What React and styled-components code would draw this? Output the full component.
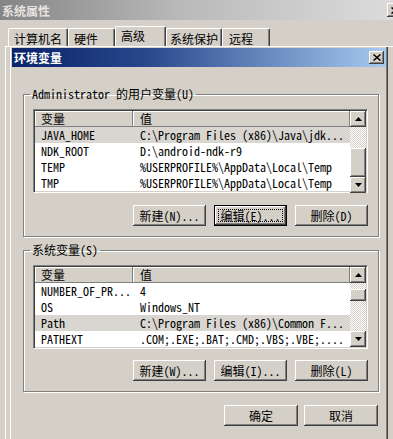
import React from "react"
import styled, { createGlobalStyle, css } from "styled-components"

const FACE = "#d4d0c8"
const FONT = `"Noto Sans Mono CJK SC", "Liberation Mono", "Noto Sans CJK SC", monospace`

const GlobalStyle = createGlobalStyle`
	html, body {
		margin: 0;
		padding: 0;
		background: ${FACE};
	}
	body {
		font-family: ${FONT};
		font-size: 12px;
		color: #000;
		overflow: hidden;
	}
`

const raised = css`
	box-shadow: inset -1px -1px #404040, inset 1px 1px #fff, inset -2px -2px #808080, inset 2px 2px ${FACE};
`

const Screen = styled.div`
	width: 393px;
	height: 439px;
	overflow: hidden;
	background: ${FACE};
`

const OuterWindow = styled.div`
	width: 400px;
`

const OuterTitle = styled.div`
	height: 20px;
	display: flex;
	align-items: center;
	justify-content: space-between;
	padding-left: 2px;
	background: linear-gradient(to right, #858585, #b9b9b9 45%, #dddddd);
	color: #e6e4e0;
	font-weight: bold;
`

const CaptionButton = styled.div`
	width: ${(p) => p.$w || 16}px;
	height: ${(p) => p.$h || 14}px;
	margin-right: ${(p) => p.$mr || 0}px;
	display: flex;
	align-items: center;
	justify-content: center;
	background: ${FACE};
	${raised}
`

const TabStrip = styled.div`
	height: 26px;
	display: flex;
	align-items: flex-end;
	padding-left: 8px;
`

const Tab = styled.div`
	width: ${(p) => p.$w}px;
	height: ${(p) => (p.$active ? 20 : 18)}px;
	box-sizing: border-box;
	padding: ${(p) => (p.$active ? 2 : 3)}px 0 0 ${(p) => p.$pl || 5}px;
	line-height: 14px;
	border-top: 1px solid #fff;
	border-left: 1px solid #fff;
	border-right: 1px solid #404040;
	border-radius: 2px 2px 0 0;
	box-shadow: inset -1px 0 #808080;
	white-space: nowrap;
`

const TabPanel = styled.div`
	margin-left: 5px;
	padding-left: 4px;
	border-left: 1px solid #fff;
	border-top: 1px solid #fff;
`

const Dialog = styled.div`
	width: 378px;
	height: 400px;
	box-sizing: border-box;
	margin-top: -1px;
	padding: 2px;
	background: ${FACE};
	box-shadow: inset 1px 1px #fff, inset -1px -1px #404040, inset -2px -2px #808080;
`

const TitleBar = styled.div`
	height: 19px;
	display: flex;
	align-items: center;
	justify-content: space-between;
	padding-left: 2px;
	background: linear-gradient(to right, #0a246a, #27468a 35%, #a6caf0);
	color: #fff;
	font-weight: bold;
`

const Body = styled.div`
	padding: 20px 7px 0 11px;
`

const Group = styled.fieldset`
	margin: 0;
	padding: 0;
	min-width: 0;
	border: 1px solid #808080;
	box-shadow: 1px 1px 0 #fff, inset 1px 1px 0 #fff;
	& + & {
		margin-top: 6px;
	}
`

const Legend = styled.legend`
	margin-left: 6px;
	padding: 0 2px;
	line-height: 14px;
	white-space: nowrap;
`

const GroupInner = styled.div`
	padding: 8px 10px 10px 9px;
`

const ListView = styled.div`
	display: flex;
	height: 84px;
	box-sizing: border-box;
	padding: 1px;
	background: #fff;
	border: 1px solid;
	border-color: #808080 #fff #fff #808080;
	box-shadow: inset 1px 1px #404040, inset -1px -1px ${FACE};
`

const Table = styled.div`
	flex: 1;
	min-width: 0;
	overflow: hidden;
`

const HeaderRow = styled.div`
	display: grid;
	grid-template-columns: 98px 1fr;
	height: 16px;
`

const HeaderCell = styled.div`
	padding-left: ${(p) => p.$pl}px;
	line-height: 16px;
	background: ${FACE};
	box-shadow: inset -1px -1px #808080, inset 1px 1px #fff;
`

const Row = styled.div`
	display: grid;
	grid-template-columns: 98px 1fr;
	height: 16px;
	line-height: 16px;
	white-space: nowrap;
	background: ${(p) => (p.$selected ? "#d9d6d1" : "#fff")};
`

const Cell = styled.div`
	padding-left: ${(p) => p.$pl}px;
	overflow: hidden;
`

const ScrollBar = styled.div`
	width: 16px;
	display: flex;
	flex-direction: column;
	background: repeating-conic-gradient(${FACE} 0 25%, #fff 0 50%) 0 0 / 2px 2px;
`

const ScrollButton = styled.div`
	height: 16px;
	flex: none;
	display: flex;
	align-items: center;
	justify-content: center;
	background: ${FACE};
	${raised}
`

const Thumb = styled.div`
	flex: none;
	background: ${FACE};
	${raised}
`

const ButtonRow = styled.div`
	display: flex;
	justify-content: flex-end;
	gap: ${(p) => p.$gap || 8}px;
	margin-top: ${(p) => p.$mt || 0}px;
	padding-right: ${(p) => p.$pr || 0}px;
`

const Button = styled.button`
	width: ${(p) => p.$w || 73}px;
	height: 21px;
	padding: 0;
	border: 0;
	font: inherit;
	color: #000;
	background: ${FACE};
	white-space: nowrap;
	${raised}
	${(p) =>
		p.$focus &&
		css`
			box-shadow: inset 0 0 0 1px #000, inset -2px -2px #404040, inset 2px 2px #fff, inset -3px -3px #808080;
			outline: 1px dotted #000;
			outline-offset: -5px;
		`}
`

const Arrow = ({ down }) => (
	<svg width="7" height="4" viewBox="0 0 7 4">
		<polygon points={down ? "0,0 7,0 3.5,4" : "3.5,0 7,4 0,4"} fill="#000" />
	</svg>
)

const CloseGlyph = () => (
	<svg width="8" height="7" viewBox="0 0 8 7">
		<path d="M0.5 0.5 L7.5 6.5 M7.5 0.5 L0.5 6.5" stroke="#000" strokeWidth="1.5" />
	</svg>
)

const userVars = [
	{ name: "JAVA_HOME", value: "C:\\Program Files (x86)\\Java\\jdk...", selected: true },
	{ name: "NDK_ROOT", value: "D:\\android-ndk-r9" },
	{ name: "TEMP", value: "%USERPROFILE%\\AppData\\Local\\Temp" },
	{ name: "TMP", value: "%USERPROFILE%\\AppData\\Local\\Temp" },
]

const systemVars = [
	{ name: "NUMBER_OF_PR...", value: "4" },
	{ name: "OS", value: "Windows_NT" },
	{ name: "Path", value: "C:\\Program Files (x86)\\Common F...", selected: true },
	{ name: "PATHEXT", value: ".COM;.EXE;.BAT;.CMD;.VBS;.VBE;...." },
]

const VarList = ({ rows, before, thumb }) => (
	<ListView>
		<Table>
			<HeaderRow>
				<HeaderCell $pl={6}>变量</HeaderCell>
				<HeaderCell $pl={7}>值</HeaderCell>
			</HeaderRow>
			{rows.map((r) => (
				<Row key={r.name} $selected={r.selected}>
					<Cell $pl={6}>{r.name}</Cell>
					<Cell $pl={7}>{r.value}</Cell>
				</Row>
			))}
		</Table>
		<ScrollBar>
			<ScrollButton>
				<Arrow />
			</ScrollButton>
			<div style={{ height: before, flex: "none" }} />
			<Thumb style={{ height: thumb }} />
			<div style={{ flex: 1 }} />
			<ScrollButton>
				<Arrow down />
			</ScrollButton>
		</ScrollBar>
	</ListView>
)

const App = () => {
	return (
		<Screen>
			<GlobalStyle />
			<OuterWindow>
				<OuterTitle>
					<span>系统属性</span>
					<CaptionButton $mr={-3}>
						<CloseGlyph />
					</CaptionButton>
				</OuterTitle>
				<TabStrip>
					<Tab $w={60}>计算机名</Tab>
					<Tab $w={47}>硬件</Tab>
					<Tab $w={51} $active $pl={5}>
						高级
					</Tab>
					<Tab $w={56} $pl={3}>
						系统保护
					</Tab>
					<Tab $w={48} $pl={6}>
						远程
					</Tab>
				</TabStrip>
				<TabPanel>
					<Dialog>
						<TitleBar>
							<span>环境变量</span>
							<CaptionButton $w={15} $h={13} $mr={2}>
								<CloseGlyph />
							</CaptionButton>
						</TitleBar>
						<Body>
							<Group>
								<Legend>Administrator 的用户变量(U)</Legend>
								<GroupInner>
									<VarList rows={userVars} before={21} thumb={29} />
									<ButtonRow $mt={12}>
										<Button>新建(N)...</Button>
										<Button $focus>编辑(E)...</Button>
										<Button>删除(D)</Button>
									</ButtonRow>
								</GroupInner>
							</Group>
							<Group>
								<Legend>系统变量(S)</Legend>
								<GroupInner>
									<VarList rows={systemVars} before={6} thumb={12} />
									<ButtonRow $mt={11}>
										<Button>新建(W)...</Button>
										<Button>编辑(I)...</Button>
										<Button>删除(L)</Button>
									</ButtonRow>
								</GroupInner>
							</Group>
							<ButtonRow $mt={13} $gap={6} $pr={1}>
								<Button $w={74}>确定</Button>
								<Button $w={74}>取消</Button>
							</ButtonRow>
						</Body>
					</Dialog>
				</TabPanel>
			</OuterWindow>
		</Screen>
	)
}

export default App
